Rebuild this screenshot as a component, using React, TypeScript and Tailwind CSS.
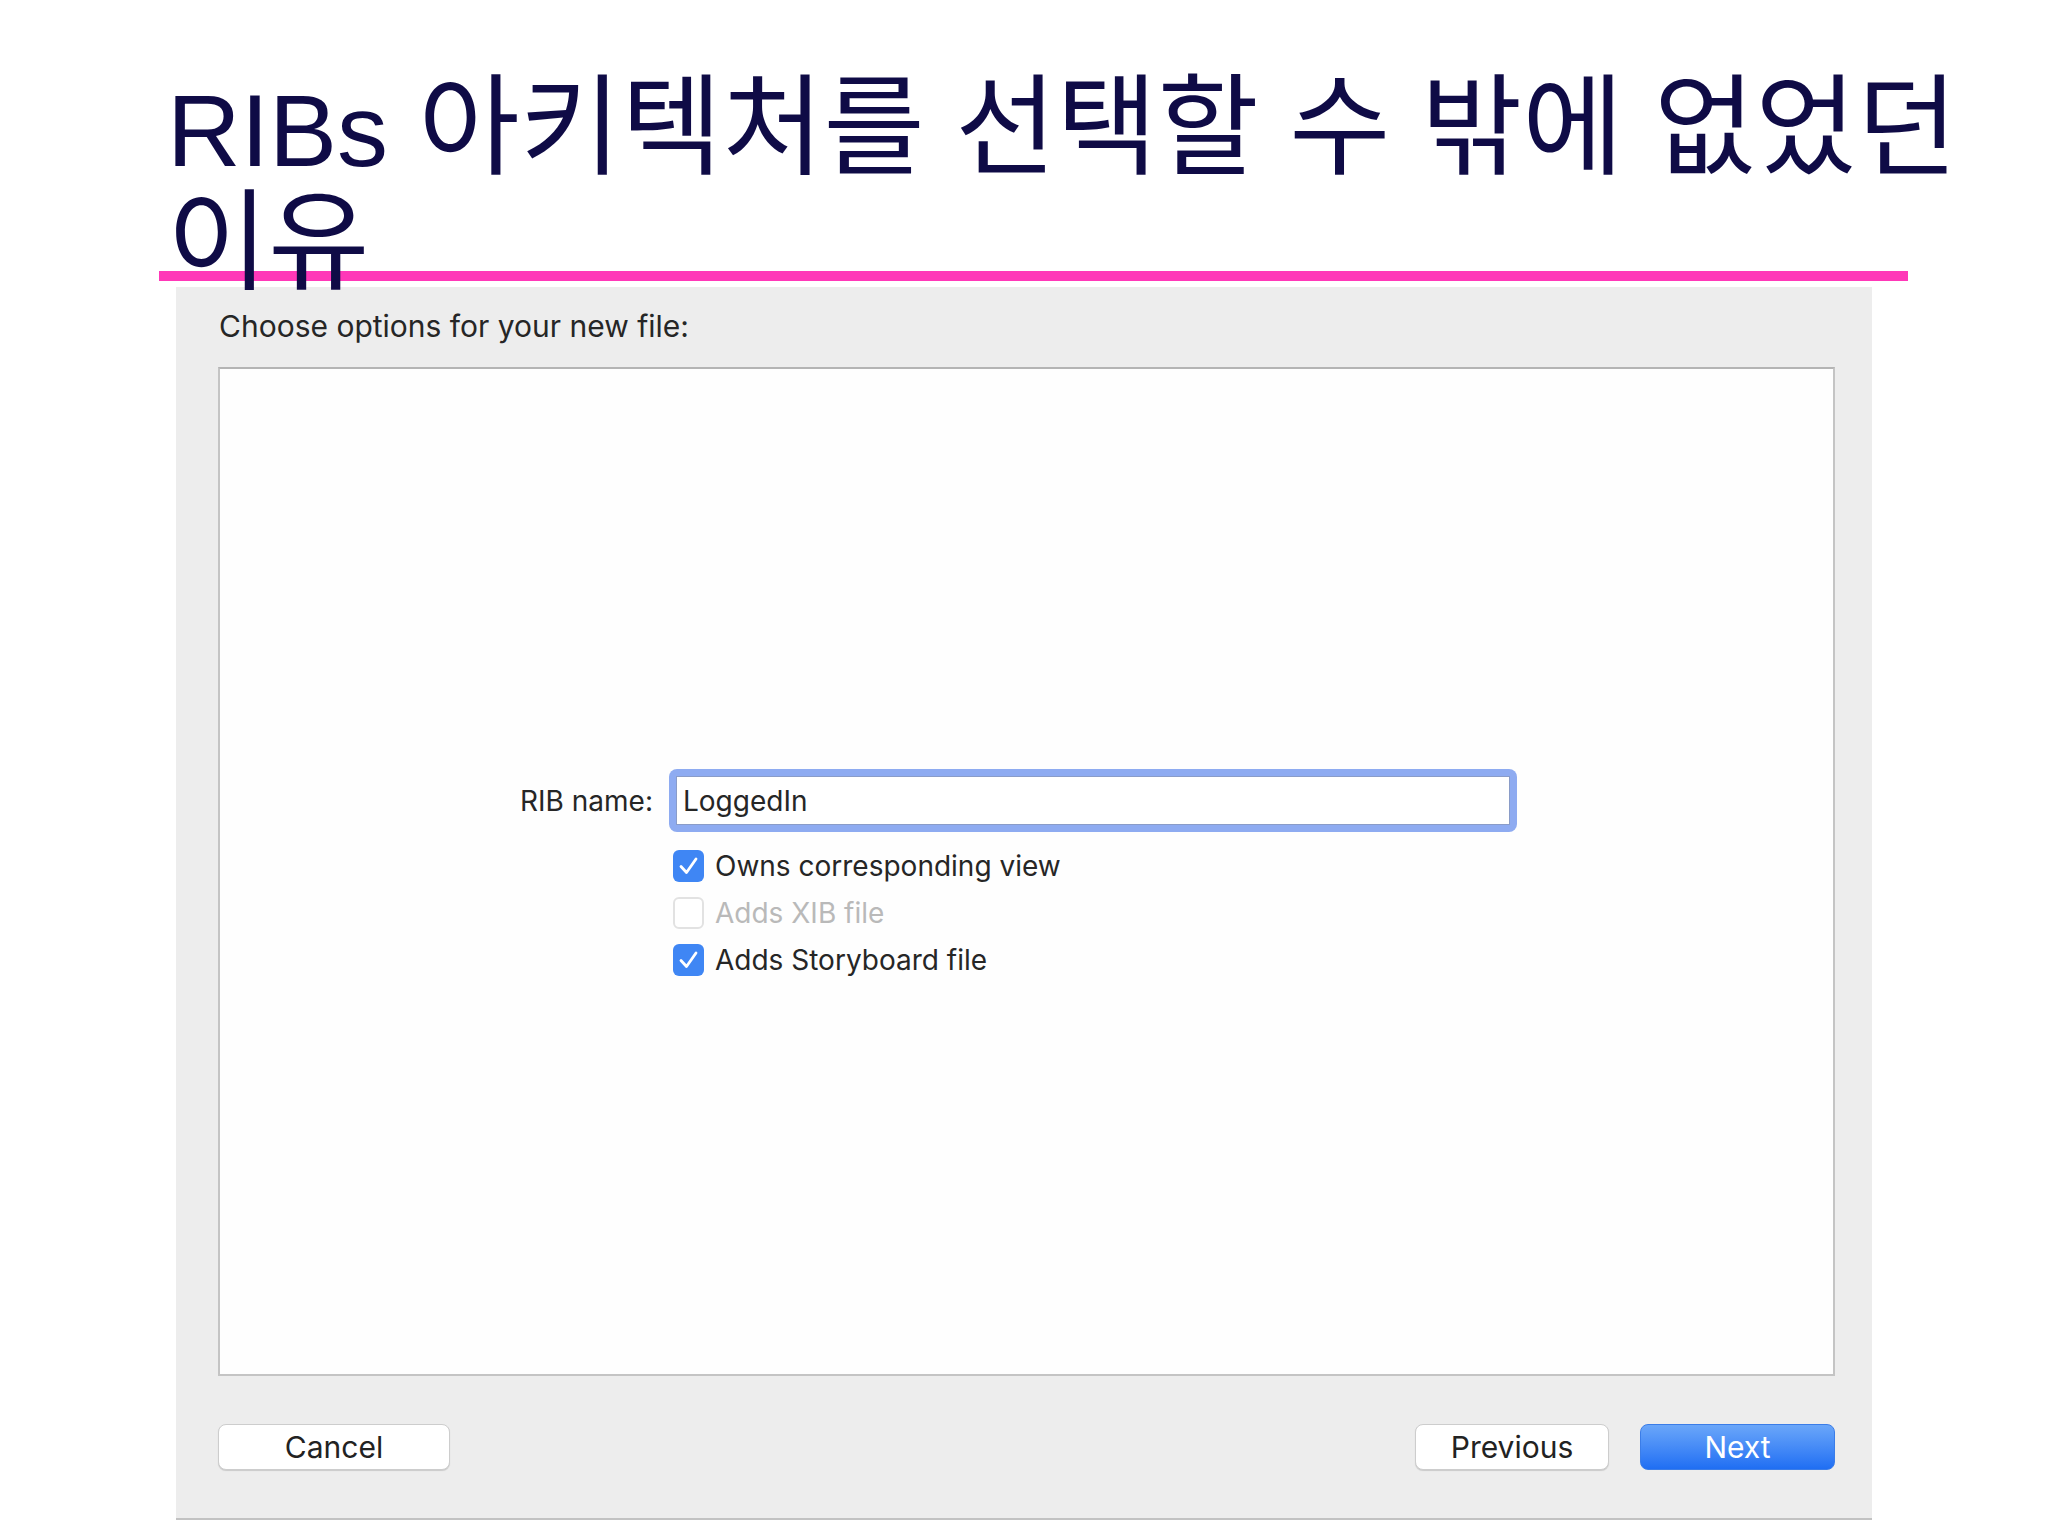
import React from 'react';

const Check: React.FC = () => (
    <svg width="31" height="32" viewBox="0 0 31 32" className="block">
        <path d="M8 16.5 L13.5 22.5 L23 9" fill="none" stroke="white" strokeWidth="2.8" strokeLinecap="round" strokeLinejoin="round" />
    </svg>
);

const options = [
    { label: 'Owns corresponding view', checked: true, disabled: false },
    { label: 'Adds XIB file', checked: false, disabled: true },
    { label: 'Adds Storyboard file', checked: true, disabled: false },
];

const App: React.FC = () => {
    return (
        <div className="w-[2048px] h-[1536px] bg-white overflow-hidden">
            {/* Slide title */}
            <div className="h-[271px] pl-[167px] pt-[72px]">
                <h1 className="w-[1870px] text-[110px] leading-[111px] text-[#0f0b46] break-keep font-['Liberation_Sans','Noto_Sans_CJK_KR',sans-serif]">
                    <span className="text-[102px]">RIBs</span> 아키텍처를 선택할 수 밖에 없었던 이유
                </h1>
            </div>
            <div className="ml-[159px] w-[1749px] h-[10px] bg-[#ff38b8]" />

            {/* Xcode new file dialog */}
            <div className="mt-[6px] ml-[176px] w-[1696px] h-[1233px] bg-[#ededed] border-b-2 border-[#c2c2c2] pt-[21px] pl-[42px] pr-[37px] flex flex-col font-['Inter',sans-serif] text-[#262626]">
                <p className="text-[30px] leading-[36px] pl-[1px]">Choose options for your new file:</p>

                <div className="mt-[23px] h-[1009px] bg-[#fefefe] border-2 border-[#c4c4c4] border-t-[#b4b4b4] pt-[400px]">
                    <div className="flex items-center">
                        <span className="w-[433px] text-right text-[28px]">RIB name:</span>
                        <div className="ml-[16px] w-[848px] h-[63px] rounded-[8px] bg-[#8eabf1] p-[7px]">
                            <div className="h-full bg-white border border-[#8a9cc8] flex items-center pl-[6px] text-[28px]">
                                LoggedIn
                            </div>
                        </div>
                    </div>

                    <div className="ml-[453px] mt-[18px] flex flex-col gap-[15px]">
                        {options.map((opt, i) => (
                            <div key={i} className="flex items-center gap-[11px] h-[32px]">
                                {opt.checked ? (
                                    <div className="w-[31px] h-[32px] rounded-[6px] bg-[#3f86f4]">
                                        <Check />
                                    </div>
                                ) : (
                                    <div className="w-[31px] h-[32px] rounded-[6px] bg-white border-2 border-[#e2e2e2]" />
                                )}
                                <span className={`text-[28px] ${opt.disabled ? 'text-[#b9b9b9]' : 'text-[#262626]'}`}>
                                    {opt.label}
                                </span>
                            </div>
                        ))}
                    </div>
                </div>

                <div className="mt-[48px] flex justify-between">
                    <button className="w-[232px] h-[46px] rounded-[8px] bg-white border border-[#cdcdcd] shadow-[0_1px_1px_rgba(0,0,0,0.15)] text-[30px] leading-none text-[#222]">
                        Cancel
                    </button>
                    <div className="flex gap-[31px]">
                        <button className="w-[194px] h-[46px] rounded-[8px] bg-white border border-[#cdcdcd] shadow-[0_1px_1px_rgba(0,0,0,0.15)] text-[30px] leading-none text-[#222]">
                            Previous
                        </button>
                        <button className="w-[195px] h-[46px] rounded-[8px] bg-linear-to-b from-[#6aa6f9] to-[#1f6ef3] border border-[#3b7de8] text-[30px] leading-none text-white">
                            Next
                        </button>
                    </div>
                </div>
            </div>
        </div>
    );
};

export default App;
